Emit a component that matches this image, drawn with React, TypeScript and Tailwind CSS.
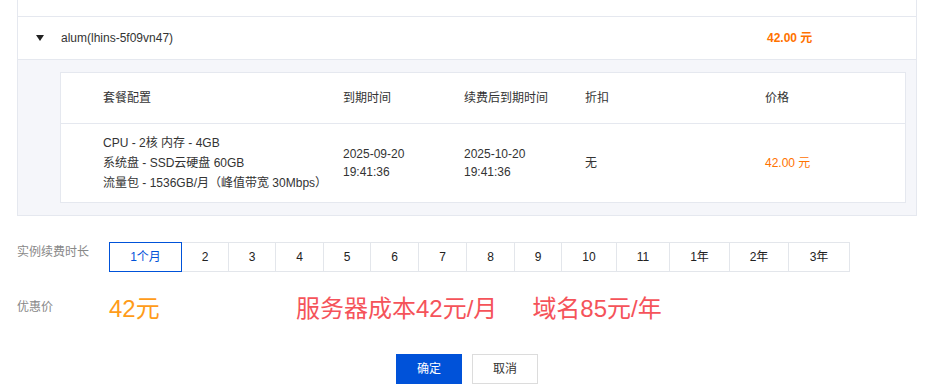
import React from "react";

const durations = [
  { label: "1个月", w: 73 },
  { label: "2", w: 48 },
  { label: "3", w: 48 },
  { label: "4", w: 49 },
  { label: "5", w: 48 },
  { label: "6", w: 49 },
  { label: "7", w: 49 },
  { label: "8", w: 49 },
  { label: "9", w: 48 },
  { label: "10", w: 56 },
  { label: "11", w: 54 },
  { label: "1年", w: 61 },
  { label: "2年", w: 60 },
  { label: "3年", w: 62 },
];

export default function App() {
  return (
    <div
      className="w-[926px] h-[390px] bg-white overflow-hidden text-[12px] text-[#333]"
      style={{ fontFamily: '"Liberation Sans", "Noto Sans CJK SC", sans-serif' }}
    >
      <div className="ml-[17px] w-[900px] border-x border-b border-[#e5e8ef]">
        <div className="h-[17px] border-b border-[#e5e8ef]" />
        <div className="h-[43px] flex items-center border-b border-[#e5e8ef]">
          <div className="w-[43px] flex justify-center">
            <svg width="8" height="6" viewBox="0 0 8 6">
              <path d="M0 0 L8 0 L4 6 Z" fill="#222" />
            </svg>
          </div>
          <div className="w-[706px]">alum(lhins-5f09vn47)</div>
          <div className="font-bold text-[#ff7200]">42.00 元</div>
        </div>
        <div className="bg-[#f5f6fa] pt-[12px] pb-[12px] pl-[42px] pr-[10px]">
          <div className="bg-white border border-[#e5e8ef]">
            <div className="h-[51px] flex items-center border-b border-[#e5e8ef] text-[#333]">
              <div className="w-[282px] pl-[42px]">套餐配置</div>
              <div className="w-[121px]">到期时间</div>
              <div className="w-[121px]">续费后到期时间</div>
              <div className="w-[180px]">折扣</div>
              <div>价格</div>
            </div>
            <div className="h-[78px] flex items-center leading-[20px]">
              <div className="w-[282px] pl-[42px]">
                <div>CPU - 2核 内存 - 4GB</div>
                <div>系统盘 - SSD云硬盘 60GB</div>
                <div>流量包 - 1536GB/月（峰值带宽 30Mbps）</div>
              </div>
              <div className="w-[121px] leading-[18px]">
                <div>2025-09-20</div>
                <div>19:41:36</div>
              </div>
              <div className="w-[121px] leading-[18px]">
                <div>2025-10-20</div>
                <div>19:41:36</div>
              </div>
              <div className="w-[180px]">无</div>
              <div className="text-[#ff7200]">42.00 元</div>
            </div>
          </div>
        </div>
      </div>

      <div className="flex mt-[26px] ml-[17px]">
        <div className="w-[92px] shrink-0 text-[#888] pt-[1px]">实例续费时长</div>
        <div className="flex">
          {durations.map((d, i) => (
            <div
              key={d.label}
              style={{ width: d.w }}
              className={
                i === 0
                  ? "shrink-0 h-[30px] flex items-center justify-center border border-[#0052d9] text-[#0052d9] relative z-10"
                  : "shrink-0 h-[30px] flex items-center justify-center border border-[#e3e6eb] -ml-px text-[#222]"
              }
            >
              {d.label}
            </div>
          ))}
        </div>
      </div>

      <div className="flex mt-[22px] ml-[17px]">
        <div className="w-[92px] text-[#888] pt-[4px]">优惠价</div>
        <div className="w-[187px] text-[24px] leading-[30px] text-[#ff9c19]">42元</div>
        <div className="text-[24px] leading-[30px] text-[#f5535a]">
          <span>服务器成本42元/月</span>
          <span className="ml-[35px]">域名85元/年</span>
        </div>
      </div>

      <div className="flex justify-center mt-[30px] gap-[10px] pl-[8px]">
        <div className="w-[66px] h-[30px] flex items-center justify-center bg-[#0052d9] text-white">确定</div>
        <div className="w-[66px] h-[30px] flex items-center justify-center border border-[#dcdcdc] text-[#333]">取消</div>
      </div>
    </div>
  );
}
